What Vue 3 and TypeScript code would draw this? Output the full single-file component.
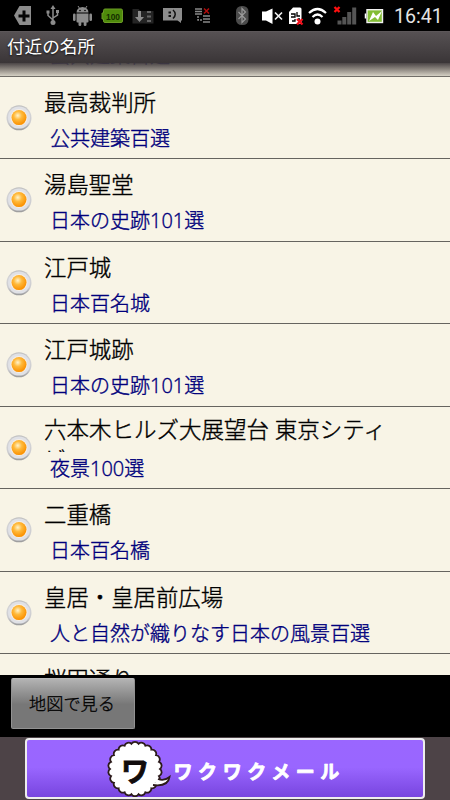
<script setup lang="ts">
interface Spot {
  name: string
  category: string
  long?: boolean
}

const spots: Spot[] = [
  { name: '国会議事堂', category: '公共建築百選' },
  { name: '最高裁判所', category: '公共建築百選' },
  { name: '湯島聖堂', category: '日本の史跡101選' },
  { name: '江戸城', category: '日本百名城' },
  { name: '江戸城跡', category: '日本の史跡101選' },
  { name: '六本木ヒルズ大展望台 東京シティビュー', category: '夜景100選', long: true },
  { name: '二重橋', category: '日本百名橋' },
  { name: '皇居・皇居前広場', category: '人と自然が織りなす日本の風景百選' },
  { name: '桜田通り', category: '日本の道100選' },
]

// Scalloped outline of the speech balloon in the banner.
const lobes = 22
const ring = (n: number): string => {
  const at = (i: number) => {
    const a = (i / n) * Math.PI * 2
    return `${(108 + 25 * Math.cos(a)).toFixed(2)} ${(29 + 25.5 * Math.sin(a)).toFixed(2)}`
  }
  let d = `M${at(0)}`
  for (let i = 1; i <= n; i++) d += `A4.2 4.2 0 0 1 ${at(i)}`
  return d + 'Z'
}
const balloon = ring(lobes)
</script>

<template>
  <div class="screen">
    <header class="status">
      <svg class="status-icons" width="390" height="31" viewBox="0 0 390 31">
        <g fill="#8c8c8c">
          <path d="M14 15.500 19.500 6H31V25H19.500Z" />
          <path d="M22.500 10.500h3v4h4v3h-4v4h-3v-4h-4v-3h4z" fill="#050505" />
          <g stroke="#8c8c8c" stroke-width="1.500" fill="none">
            <path d="M53 8V22M48 12v3.500l5 4.500M57.500 11v4l-4.500 3" />
          </g>
          <path d="M53 5l2.500 4h-5zM46.500 10.500h3v3h-3zM56 10h3v3h-3z" />
          <circle cx="53" cy="22.500" r="2.500" />
          <path d="M76.500 12.500a6 5.500 0 0 1 12 0z" />
          <path d="M76.500 13.500h12v8q0 1-1 1h-10q-1 0-1-1z" />
          <rect x="73" y="13.500" width="2.600" height="7.500" rx="1.300" />
          <rect x="89.400" y="13.500" width="2.600" height="7.500" rx="1.300" />
          <rect x="78.500" y="20" width="2.800" height="6" rx="1.300" />
          <rect x="83.700" y="20" width="2.800" height="6" rx="1.300" />
          <path d="M78 6l2 3M87 6l-2 3" stroke="#8c8c8c" />
          <circle cx="80" cy="10.500" r=".8" fill="#000" />
          <circle cx="85" cy="10.500" r=".8" fill="#000" />
        </g>
        <path d="M105 9h16q1.500 0 1.500 1.500v10.500q0 1.500-1.500 1.500h-16q-1.500 0-1.500-1.500v-2h-1.500v-6h1.500v-2.500q0-1.500 1.500-1.500z" fill="#4e8a0b" stroke="#6b9b25" />
        <text x="106" y="19.500" class="charge" textLength="14" lengthAdjust="spacingAndGlyphs">100</text>
        <path d="M132.500 9h6l2 2h13v12.500h-21z" fill="#242424" />
        <path d="M138 11h3v6h3l-4.500 5-4.500-5h3z" fill="#8c8c8c" />
        <path d="M147 11h4v2h-4zM147 15.500h4v2h-4zM147 20h4v2h-4z" fill="#666" />
        <path d="M163 8h19v12.500h-1v2.500l-3.500-2.500h-14.500z" fill="#8c8c8c" />
        <path d="M168.500 11.500h2.500v2h-2.500zM168.500 15h2.500v2h-2.500z" fill="#111" />
        <path d="M173 10q4.500 4 0 8.500" fill="none" stroke="#111" stroke-width="1.500" />
        <path d="M195 9h7M195 11.500h7M195 14h7M203 16h7M203 19h7M203 22h7" stroke="#888" stroke-width="1.500" />
        <path d="M198 16v4h4" fill="none" stroke="#888" stroke-width="1.500" stroke-dasharray="2 1" />
        <path d="M204 8.500l5 5M209 8.500l-5 5" stroke="#b00c0c" stroke-width="1.500" />
        <rect x="236" y="6" width="12.500" height="19" rx="5.500" fill="#4b4b4b" />
        <path d="M238.500 12l7 7-3.500 3.500v-14l3.500 3.500-7 7" fill="none" stroke="#999" stroke-width="1.200" />
        <path d="M262 11.500h4l6.500-3v15.500l-6.500-3.500h-4z" fill="#fff" />
        <path d="M275 12.500l7 7M282 12.500l-7 7" stroke="#eee" stroke-width="1.700" />
        <path d="M289 12l4-4.500h7q1.500 0 1.500 1.500V24h-12.500z" fill="#fff" />
        <path d="M291 14h4v3h-4M297 12v4h3M292 21h3v-2M298 19h2" fill="none" stroke="#000" stroke-width="1.300" />
        <path d="M297 19l5.500 5.500M302.500 19l-5.500 5.500" stroke="#f00e19" stroke-width="2.300" />
        <g fill="none" stroke="#fff" stroke-width="2.200">
          <path d="M309 13q8.500-8 17 0M312.500 17q5-5 10 0" />
        </g>
        <circle cx="317.500" cy="21.500" r="3" fill="#fff" />
        <path d="M334.500 7l5 5M339.500 7l-5 5" stroke="#ff1010" stroke-width="2.300" />
        <path d="M337.500 20.500h4v4h-4zM342.300 17h4v7.500h-4zM347.200 12h4v12.500h-4zM352.200 7.500h4v17h-4z" fill="#555" />
        <rect x="367" y="9.700" width="15.500" height="12.800" fill="#83bd35" stroke="#f2f2f2" stroke-width="1.400" />
        <path d="M365.500 13.500v5" stroke="#fff" stroke-width="1.500" />
        <path d="M369 21l4-9 3 4 6-5-4 9-3-3z" fill="#fff" />
      </svg>
      <span class="clock">16:41</span>
    </header>

    <h1 class="title">付近の名所</h1>

    <main class="list">
      <div class="rows">
        <article v-for="spot in spots" :key="spot.name" class="row">
          <svg class="bullet" width="26" height="26" viewBox="0 0 26 26">
            <defs>
              <radialGradient id="orb" cx=".42" cy=".36" r=".6">
                <stop offset="0" stop-color="#fff3cc" />
                <stop offset=".45" stop-color="#ffba3c" />
                <stop offset="1" stop-color="#fb9305" />
              </radialGradient>
              <linearGradient id="rim" x1="0" y1="0" x2="0" y2="1">
                <stop offset="0" stop-color="#c0c0c0" />
                <stop offset=".3" stop-color="#d4d4d6" />
                <stop offset=".7" stop-color="#ccccd0" />
                <stop offset="1" stop-color="#999" />
              </linearGradient>
            </defs>
            <circle cx="13" cy="12.800" r="12.500" fill="url(#rim)" />
            <circle cx="13" cy="12.600" r="11" fill="#e0e1e6" />
            <circle cx="13" cy="12.600" r="8.500" fill="#f5eee5" />
            <circle cx="13" cy="12.600" r="7.500" fill="url(#orb)" />
          </svg>
          <div class="text">
            <div class="name" :class="{ long: spot.long }">{{ spot.name }}</div>
            <div class="category">{{ spot.category }}</div>
          </div>
        </article>
      </div>
      <div class="fade"></div>
    </main>

    <div class="actions">
      <button type="button" class="map">地図で見る</button>
    </div>

    <footer class="ad">
      <div class="banner">
        <svg width="396" height="59" viewBox="0 0 396 59">
          <path :d="balloon" fill="#fff" stroke="#2c1b1b" stroke-width="1.800" />
          <path d="M131 39Q137 41.500 142.500 37Q141 47 126 45" fill="#fff" stroke="#2c1b1b" stroke-width="1.800" />
          <text x="94" y="41.500" class="mark">ワ</text>
          <text x="146.500" y="39" class="brand">ワクワクメール</text>
        </svg>
      </div>
    </footer>
  </div>
</template>

<style>
body {
  margin: 0;
  background: #000;
}
</style>

<style scoped>
.screen {
  display: flex;
  flex-direction: column;
  width: 450px;
  height: 800px;
  overflow: hidden;
  background: #000;
  font-family: "Open Sans", "Noto Sans CJK JP", sans-serif;
}
.status {
  display: flex;
  flex: none;
  height: 31px;
  background: #000;
}
.status-icons {
  flex: none;
}
.charge {
  font: 700 9.5px "Liberation Sans", sans-serif;
  fill: #142e00;
}
.clock {
  margin-left: 4px;
  font: 400 19.6px/33px Roboto, sans-serif;
  color: #e4e4e4;
}
.title {
  flex: none;
  box-sizing: border-box;
  height: 32px;
  margin: 0;
  padding-left: 7px;
  border-top: 1px solid #5c5759;
  background: linear-gradient(#565153, #3a3537);
  color: #fff;
  font-size: 17.6px;
  font-weight: 400;
  line-height: 29px;
  text-shadow: 0 1px 2px #111;
}
.list {
  display: grid;
  flex: none;
  height: 612px;
  overflow: hidden;
  background: #f8f4e6;
}
.rows,
.fade {
  grid-area: 1 / 1;
}
.rows {
  margin-top: -68.9px;
}
.fade {
  z-index: 1;
  height: 14px;
  background: linear-gradient(rgba(62, 56, 58, 0.93), rgba(105, 98, 94, 0.75) 45%, rgba(150, 145, 135, 0.25));
}
.row {
  display: flex;
  box-sizing: border-box;
  height: 82.5px;
  padding-left: 6px;
  border-bottom: 1px solid #66645f;
}
.bullet {
  flex: none;
  margin-top: 28px;
}
.text {
  width: 362px;
  padding-left: 12px;
  font-weight: 300;
  -webkit-text-stroke: 0.4px currentColor;
}
.name {
  height: 45px;
  overflow: hidden;
  color: #000;
  font-size: 22.4px;
  line-height: 52px;
}
.name.long {
  box-sizing: border-box;
  height: 45px;
  padding-top: 8px;
  font-size: 22.5px;
  line-height: 30.5px;
}
.category {
  padding-left: 6px;
  color: #00007c;
  font-size: 20px;
  line-height: 34.6px;
}
.actions {
  flex: none;
  box-sizing: border-box;
  height: 62px;
  padding: 3px 11px;
}
.map {
  display: block;
  box-sizing: border-box;
  width: 124px;
  height: 51px;
  padding: 0 2px 2px 0;
  border: 1px solid #929292;
  border-top-color: #bbb;
  border-radius: 2px;
  background: linear-gradient(#b3b3b3, #929292 28%, #777 52%, #777);
  color: #000;
  font: 300 17.2px "Open Sans", "Noto Sans CJK JP", sans-serif;
  -webkit-text-stroke: 0.3px currentColor;
}
.ad {
  display: flex;
  flex: none;
  justify-content: center;
  box-sizing: border-box;
  height: 63px;
  padding-top: 1px;
  background: #4d4347;
}
.banner {
  box-sizing: border-box;
  width: 400px;
  height: 61px;
  overflow: hidden;
  border: 2px solid #eee;
  border-radius: 4px;
  background: linear-gradient(#9a66ff, #9966ff 48%, #7845df);
}
.mark {
  font: 700 28px "Noto Sans CJK JP", sans-serif;
  fill: #120c0c;
  stroke: #120c0c;
  stroke-width: 0.8px;
}
.brand {
  font: 700 19px "Noto Sans CJK JP", sans-serif;
  letter-spacing: 5.6px;
  fill: #fff;
  stroke: #fff;
  stroke-width: 0.8px;
  stroke-linejoin: round;
}
</style>
